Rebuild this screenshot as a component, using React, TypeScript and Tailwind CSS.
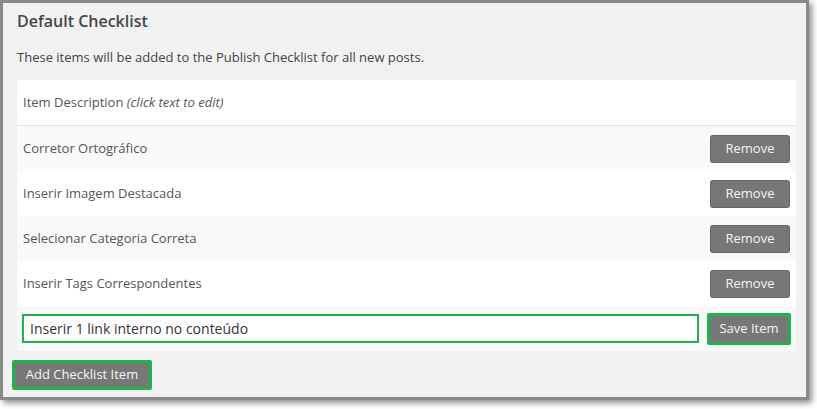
const items = [
  "Corretor Ortográfico",
  "Inserir Imagem Destacada",
  "Selecionar Categoria Correta",
  "Inserir Tags Correspondentes",
];

export default function App() {
  return (
    <div className="w-[817px] h-[409px] bg-white font-['Open_Sans',sans-serif]">
      <div className="w-[809px] h-[400px] border-[3px] border-[#8a8a8a] bg-[#f1f1f1] shadow-[3px_3px_6px_rgba(0,0,0,0.45)] pl-[14px] pt-[8px]">
        <h2 className="text-[16px] leading-[20px] font-semibold text-[#464646]">Default Checklist</h2>
        <p className="mt-[16px] text-[13px] leading-[20px] text-[#444]">
          These items will be added to the Publish Checklist for all new posts.
        </p>

        <div className="mt-[13px] w-[779px] text-[13px] text-[#555]">
          <div className="h-[46px] flex items-center px-[6px] bg-white border-b border-[#e1e1e1]">
            Item Description&nbsp;<em className="italic">(click text to edit)</em>
          </div>
          {items.map((item, i) => (
            <div
              key={item}
              className={`h-[45px] flex items-center justify-between pl-[6px] pr-[6px] ${
                i % 2 === 0 ? "bg-[#f9f9f9]" : "bg-white"
              }`}
            >
              <span>{item}</span>
              <button className="w-[80px] h-[28px] rounded-[3px] bg-[#777] border border-dotted border-[#555] text-[13px] text-[#f4f4f4]">
                Remove
              </button>
            </div>
          ))}
          <div className="h-[45px] flex items-center justify-between pl-[5px] pr-[5px] bg-[#f9f9f9]">
            <input
              readOnly
              value="Inserir 1 link interno no conteúdo"
              className="w-[677px] h-[29px] border-2 border-[#22b14c] bg-white px-[6px] text-[14px] text-[#333] outline-none"
            />
            <button className="w-[84px] h-[32px] rounded-[2px] border-[3px] border-[#22b14c] bg-[#777] text-[13px] text-[#f4f4f4]">
              Save Item
            </button>
          </div>
        </div>

        <button className="mt-[9px] ml-[-5px] w-[140px] h-[30px] rounded-[2px] border-[3px] border-[#22b14c] bg-[#777] text-[13px] text-[#f4f4f4]">
          Add Checklist Item
        </button>
      </div>
    </div>
  );
}
